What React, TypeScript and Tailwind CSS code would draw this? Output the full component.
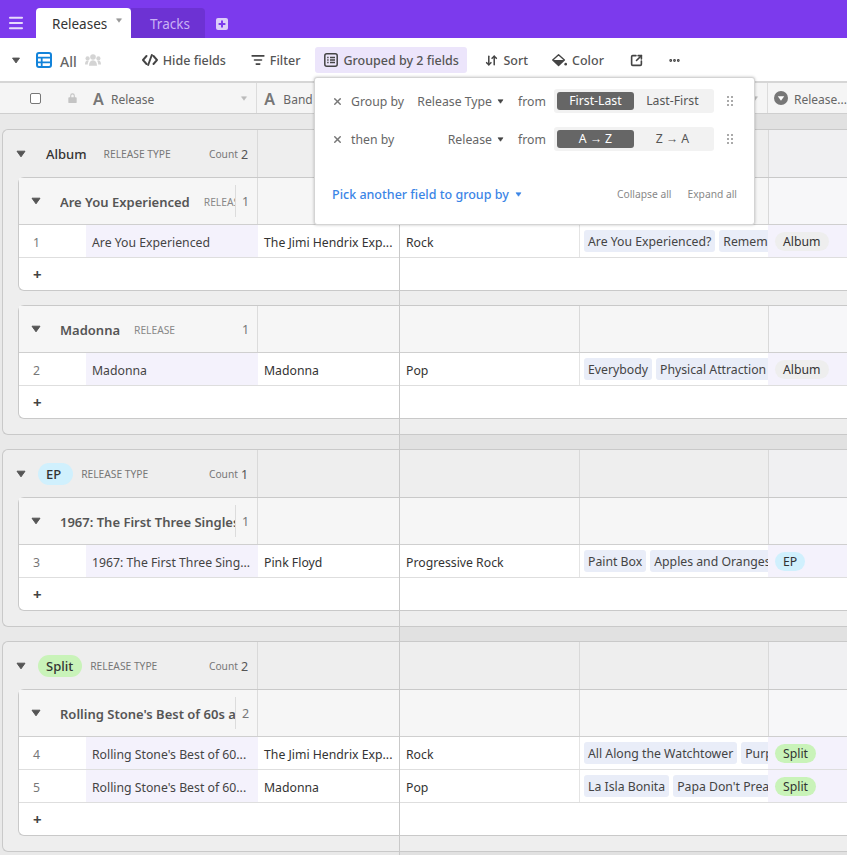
import { ArrowDownUp, Ellipsis, ListFilter, Menu, SquareArrowOutUpRight, X } from "lucide-react";

type Row = { num: number; release: string; band: string; genre: string; tags: string[]; type: string };
type Sub = { title: string; label?: string; count: number; clipped?: boolean; rows: Row[] };
type Group = { name: string; count: number; subs: Sub[] };

const groups: Group[] = [
  {
    name: "Album",
    count: 2,
    subs: [
      {
        title: "Are You Experienced",
        label: "RELEASE",
        count: 1,
        clipped: true,
        rows: [{ num: 1, release: "Are You Experienced", band: "The Jimi Hendrix Exp...", genre: "Rock", tags: ["Are You Experienced?", "Remember"], type: "Album" }],
      },
      {
        title: "Madonna",
        label: "RELEASE",
        count: 1,
        rows: [{ num: 2, release: "Madonna", band: "Madonna", genre: "Pop", tags: ["Everybody", "Physical Attraction"], type: "Album" }],
      },
    ],
  },
  {
    name: "EP",
    count: 1,
    subs: [
      {
        title: "1967: The First Three Singles",
        count: 1,
        clipped: true,
        rows: [{ num: 3, release: "1967: The First Three Sing...", band: "Pink Floyd", genre: "Progressive Rock", tags: ["Paint Box", "Apples and Oranges"], type: "EP" }],
      },
    ],
  },
  {
    name: "Split",
    count: 2,
    subs: [
      {
        title: "Rolling Stone's Best of 60s and 70s",
        count: 2,
        clipped: true,
        rows: [
          { num: 4, release: "Rolling Stone's Best of 60...", band: "The Jimi Hendrix Exp...", genre: "Rock", tags: ["All Along the Watchtower", "Purple Haze"], type: "Split" },
          { num: 5, release: "Rolling Stone's Best of 60...", band: "Madonna", genre: "Pop", tags: ["La Isla Bonita", "Papa Don't Preach"], type: "Split" },
        ],
      },
    ],
  },
];

const Caret = ({ className = "", color = "#555" }: { className?: string; color?: string }) => (
  <svg viewBox="0 0 10 8" className={className}>
    <path d="M1 1.2h8L5 6.8z" fill={color} stroke={color} strokeWidth="1" strokeLinejoin="round" />
  </svg>
);

const Pill = ({ name, small }: { name: string; small?: boolean }) => {
  const color = name === "EP" ? "bg-[#d0f0fd]" : name === "Split" ? "bg-[#c9f3b9]" : small ? "bg-[#eeeeee]" : "";
  const right = name === "EP" ? "pr-[12px]" : "pr-[9px]";
  return small ? (
    <span className={`flex h-[19px] items-center rounded-full px-2 pt-[3px] text-[12.25px] text-[#333] ${color}`}>{name}</span>
  ) : (
    <span className={`flex h-[22px] items-center rounded-full pt-[2px] pl-2 text-[13px] font-medium text-[#333] ${right} ${color}`}>{name}</span>
  );
};

const Toolbtn = ({ icon, label }: { icon: React.ReactNode; label: string }) => (
  <div className="flex items-center gap-[5px] text-[12.5px] font-medium text-[#555]">
    {icon}
    <span className="pt-[2px]">{label}</span>
  </div>
);

function LeftGroup({ group }: { group: Group }) {
  return (
    <div className="ml-[2px] rounded-l-[6px] border-y border-l border-[#c9c9c9] bg-[#eeeeee]">
      <div className="flex h-[47px]">
        <div className="flex w-[254px] items-center pr-2">
          <Caret className="ml-[13px] h-[8px] w-[10px]" />
          <div className="ml-[12px]">
            <Pill name={group.name} />
          </div>
          <span className="ml-2 pt-[3px] text-[10.25px] text-[#777]">RELEASE TYPE</span>
          <span className="ml-auto pt-[3px] text-[10.25px] text-[#777]">Count</span>
          <span className="ml-[3px] w-[8px] pt-[3px] text-[12.5px] text-[#555]">{group.count}</span>
        </div>
        <div className="w-px bg-[#d9d9d9]" />
      </div>
      <div className="flex flex-col gap-[14px] pb-[15px] pl-[15px]">
        {group.subs.map((sub) => (
          <div key={sub.title} className="rounded-l-[6px] border-y border-l border-[#c9c9c9] bg-white">
            <div className="flex h-[47px] border-b border-[#cfcfcf] bg-[#f6f6f6]">
              <div className="flex w-[238px] items-center">
                <Caret className="ml-[12px] h-[8px] w-[10px]" />
                <div className={`ml-[19px] flex h-[32px] w-[176px] items-center overflow-hidden whitespace-nowrap ${sub.clipped ? "border-r border-[#dcdcdc]" : ""}`}>
                  <span className="pt-[3px] text-[13px] font-semibold text-[#555]">{sub.title}</span>
                  {sub.label && <span className="ml-[14px] pt-[3px] text-[10.25px] text-[#888]">{sub.label}</span>}
                </div>
                <span className="ml-[6px] pt-[3px] text-[12.5px] text-[#777]">{sub.count}</span>
              </div>
              <div className="w-px bg-[#dcdcdc]" />
            </div>
            {sub.rows.map((row) => (
              <div key={row.num} className="flex h-[33px] border-b border-[#dedede] text-[12.25px] leading-[36px]">
                <div className="w-[67px] pl-[14px] text-[#777]">{row.num}</div>
                <div className="w-[172px] bg-[#f4f2fc] pl-[6px] whitespace-nowrap text-[#444]">{row.release}</div>
                <div className="pl-[6px] whitespace-nowrap text-[#333]">{row.band}</div>
              </div>
            ))}
            <div className="flex h-[32px] items-center pl-[14px] text-[15px] font-bold text-[#444]">+</div>
          </div>
        ))}
      </div>
    </div>
  );
}

function RightCols({ tint }: { tint: string }) {
  return (
    <div className="flex h-full w-[1000px]">
      <div className="w-[180px] border-r border-[#d9d9d9]" />
      <div className="w-[189px] border-r border-[#d9d9d9]" />
      <div className={`flex-1 ${tint}`} />
    </div>
  );
}

function RightGroup({ group }: { group: Group }) {
  return (
    <div className="border-y border-[#c9c9c9] bg-[#eeeeee]">
      <div className="h-[47px]">
        <RightCols tint="bg-[#f0f0f2]" />
      </div>
      <div className="flex flex-col gap-[14px] pb-[15px]">
        {group.subs.map((sub) => (
          <div key={sub.title} className="border-y border-[#c9c9c9] bg-white">
            <div className="h-[47px] border-b border-[#cfcfcf] bg-[#f6f6f6]">
              <RightCols tint="bg-[#f7f7f9]" />
            </div>
            {sub.rows.map((row) => (
              <div key={row.num} className="flex h-[33px] w-[1000px] border-b border-[#dedede]">
                <div className="w-[180px] border-r border-[#e4e4e4] pl-[6px] text-[12.25px] leading-[36px] text-[#333]">{row.genre}</div>
                <div className="flex w-[188px] items-center gap-[4px] overflow-hidden pl-[4px]">
                  {row.tags.map((t) => (
                    <span key={t} className="flex h-[22px] shrink-0 items-center rounded-[3px] bg-[#e9edf8] px-[4px] pt-[3px] text-[12.25px] whitespace-nowrap text-[#444]">
                      {t}
                    </span>
                  ))}
                </div>
                <div className="flex flex-1 items-center bg-[#f4f2fc] pl-[7px]">
                  <Pill name={row.type} small />
                </div>
              </div>
            ))}
            <div className="h-[32px]" />
          </div>
        ))}
      </div>
    </div>
  );
}

function SortRow({ label, field, a, b }: { label: string; field: string; a: string; b: string }) {
  return (
    <div className="flex h-[24px] items-center text-[12.25px] text-[#666]">
      <X size={11} strokeWidth={3.2} className="ml-[17px] text-[#777]" />
      <span className="ml-[8px] w-[66px] pt-[2px]">{label}</span>
      <div className="flex w-[87px] items-center justify-end gap-[5px]">
        <span className="pt-[2px]">{field}</span>
        <Caret className="h-[5px] w-[7px]" color="#444" />
      </div>
      <span className="ml-[14px] pt-[2px]">from</span>
      <div className="ml-[8px] flex h-[24px] w-[160px] items-center rounded-[3px] bg-[#f2f2f2] px-[3px]">
        <span className="flex h-[18px] w-[77px] items-center justify-center rounded-[3px] bg-[#666] pt-[1px] text-white">{a}</span>
        <span className="flex h-[18px] flex-1 items-center justify-center pt-[1px] text-[#555]">{b}</span>
      </div>
      <div className="ml-[13px] grid grid-cols-2 gap-x-[2px] gap-y-[2px]">
        {[0, 1, 2, 3, 4, 5].map((i) => (
          <span key={i} className="h-[2px] w-[2px] bg-[#aaa]" />
        ))}
      </div>
    </div>
  );
}

export default function App() {
  return (
    <div className="relative h-[855px] w-[847px] overflow-hidden bg-white font-['Noto_Sans',sans-serif]">
      {/* tabs */}
      <div className="flex h-[38px] items-end bg-[#7c3aed]">
        <Menu size={18} strokeWidth={2.8} className="mb-[6px] ml-[7px] text-[#e6dafc]" />
        <div className="ml-[11px] flex h-[30px] w-[95px] items-center rounded-t-[4px] bg-white pl-[16px] text-[13.5px] text-[#333]">
          <span className="pt-[2px]">Releases</span>
          <Caret className="mb-[6px] ml-[8px] h-[5px] w-[8px]" color="#999" />
        </div>
        <div className="flex h-[30px] w-[74px] items-center rounded-tr-[4px] bg-[#6d32d3] pt-[2px] pl-[19px] text-[13.5px] text-[#c9b1f5]">Tracks</div>
        <svg viewBox="0 0 12 12" className="mb-[8px] ml-[11px] h-[12px] w-[12px]">
          <rect width="12" height="12" rx="2" fill="#dccdf9" />
          <path d="M6 2.6v6.8M2.6 6h6.8" stroke="#7c3aed" strokeWidth="2" />
        </svg>
      </div>

      {/* toolbar */}
      <div className="flex h-[45px] items-center border-b-2 border-[#d6d6d6] pt-[1px]">
        <Caret className="ml-[11px] h-[7px] w-[10px]" />
        <svg viewBox="0 0 16 16" className="ml-[15px] h-[16px] w-[16px]">
          <rect x="1" y="1" width="14" height="14" rx="2" fill="none" stroke="#1283da" strokeWidth="2" />
          <path d="M1 5.7h14M1 10.3h14M5.7 5.7v10" stroke="#1283da" strokeWidth="1.8" />
        </svg>
        <span className="ml-[8px] pt-[2px] text-[14px] font-medium text-[#666]">All</span>
        <svg viewBox="0 0 16 12" className="ml-[8px] h-[12px] w-[16px]" fill="#d4d4d4">
          <circle cx="8" cy="3" r="2.8" />
          <circle cx="2.6" cy="4.4" r="2.1" />
          <circle cx="13.4" cy="4.4" r="2.1" />
          <path d="M4 11.8c0-3.5 1.5-5.6 4-5.6s4 2.1 4 5.6zM0 10.4c0-2.2.9-3.8 2.6-3.8.5 0 .9.1 1.2.3C3 8 2.8 9.2 2.8 10.4zM16 10.4c0-2.2-.9-3.8-2.6-3.8-.5 0-.9.1-1.2.3.8 1.1 1 2.3 1 3.5z" />
        </svg>
        <div className="ml-[41px]">
          <Toolbtn
            label="Hide fields"
            icon={
              <svg viewBox="0 0 16 12" className="h-[12px] w-[16px]" fill="none" stroke="#444" strokeWidth="1.9" strokeLinecap="round" strokeLinejoin="round">
                <path d="M4.5 2 1 6l3.5 4M11.5 2 15 6l-3.5 4M9.8 1 6.2 11" />
              </svg>
            }
          />
        </div>
        <div className="ml-[25px]">
          <Toolbtn label="Filter" icon={<ListFilter size={14} strokeWidth={2.8} className="text-[#444]" />} />
        </div>
        <div className="ml-[15px] flex h-[26px] w-[152px] items-center gap-[5px] rounded-[3px] bg-[#ece5fb] pl-[9px] text-[12.5px] font-medium text-[#555]">
          <svg viewBox="0 0 14 14" className="h-[14px] w-[14px]" fill="none" stroke="#444" strokeWidth="1.5">
            <rect x="0.8" y="0.8" width="12.4" height="12.4" rx="2" />
            <path d="M3.2 4.6h1.4M6 4.6h5M3.2 7h1.4M6 7h5M3.2 9.4h1.4M6 9.4h5" />
          </svg>
          <span className="pt-[2px]">Grouped by 2 fields</span>
        </div>
        <div className="ml-[18px]">
          <Toolbtn label="Sort" icon={<ArrowDownUp size={13} strokeWidth={2.8} className="text-[#444]" />} />
        </div>
        <div className="ml-[24px]">
          <Toolbtn
            label="Color"
            icon={
              <svg viewBox="0 0 16 14" className="h-[14px] w-[15px]" fill="#444">
                <path d="M7 1.4 13.2 7 7 12.8.8 7z" fill="none" stroke="#444" strokeWidth="1.5" strokeLinejoin="round" />
                <path d="M1 7h12L7 12.8z" />
                <circle cx="14.6" cy="11.4" r="1.4" />
              </svg>
            }
          />
        </div>
        <SquareArrowOutUpRight size={13} strokeWidth={3} className="ml-[26px] text-[#444]" />
        <Ellipsis size={13} strokeWidth={3.2} className="ml-[25px] text-[#444]" />
      </div>

      {/* column headers */}
      <div className="flex h-[31px] border-b border-[#cfcfcf] bg-[#f5f5f5] text-[12px] text-[#666]">
        <div className="flex w-[258px] items-center border-r border-[#dcdcdc]">
          <span className="ml-[30px] h-[11px] w-[11px] rounded-[2px] border border-[#777] bg-white" />
          <svg viewBox="0 0 10 12" className="ml-[27px] h-[10px] w-[9px]" fill="#c4c4c4">
            <path d="M1 5h8a1 1 0 0 1 1 1v5a1 1 0 0 1-1 1H1a1 1 0 0 1-1-1V6a1 1 0 0 1 1-1zM2.2 5V3.2a2.8 2.8 0 0 1 5.6 0V5H6.5V3.2a1.5 1.5 0 0 0-3 0V5z" />
          </svg>
          <span className="ml-[16px] w-[18px] pt-[2px] text-[16px] font-semibold text-[#777]">A</span>
          <span className="pt-[3px]">Release</span>
          <Caret className="mr-[8px] ml-auto h-[5px] w-[8px]" color="#bbb" />
        </div>
        <div className="flex w-[142px] items-center border-r border-[#dcdcdc] pl-[7px]">
          <span className="w-[19px] pt-[2px] text-[16px] font-semibold text-[#777]">A</span>
          <span className="pt-[3px]">Band</span>
        </div>
        <div className="flex flex-1 items-center">
          <div className="flex h-full w-[369px] items-center justify-end border-r border-[#dcdcdc] pr-[8px]">
            <Caret className="h-[5px] w-[8px]" color="#bbb" />
          </div>
          <svg viewBox="0 0 14 14" className="ml-[6px] h-[14px] w-[14px]">
            <circle cx="7" cy="7" r="7" fill="#777" />
            <path d="M3.8 5.2h6.4L7 9.8z" fill="#fff" />
          </svg>
          <span className="ml-[6px] pt-[3px]">Release...</span>
        </div>
      </div>

      {/* panes */}
      <div className="flex">
        <div className="w-[400px] shrink-0 overflow-hidden border-r border-[#c9c9c9] bg-[#e9e9e9] pt-[15px]">
          <div className="flex flex-col gap-[14px] pb-[14px]">
            {groups.map((g) => (
              <LeftGroup key={g.name} group={g} />
            ))}
          </div>
        </div>
        <div className="flex-1 overflow-hidden bg-[#e1e1e1] pt-[15px]">
          <div className="flex flex-col gap-[14px] pb-[14px]">
            {groups.map((g) => (
              <RightGroup key={g.name} group={g} />
            ))}
          </div>
        </div>
      </div>

      {/* group popover */}
      <div className="absolute top-[77px] left-[314px] h-[148px] w-[441px] rounded-[3px] border border-[#d4d4d4] bg-white shadow-[0_0_3px_rgba(0,0,0,0.25)]">
        <div className="mt-[11px] flex flex-col gap-[14px]">
          <SortRow label="Group by" field="Release Type" a="First-Last" b="Last-First" />
          <SortRow label="then by" field="Release" a="A → Z" b="Z → A" />
        </div>
        <div className="mt-[33px] flex items-center pr-[17px] pl-[17px]">
          <span className="pt-[2px] text-[12.5px] font-medium text-[#3b85e6]">Pick another field to group by</span>
          <Caret className="ml-[6px] h-[5px] w-[7px]" color="#3b85e6" />
          <span className="ml-auto text-[10.25px] text-[#888]">Collapse all</span>
          <span className="ml-[16px] text-[10.25px] text-[#888]">Expand all</span>
        </div>
      </div>
    </div>
  );
}
